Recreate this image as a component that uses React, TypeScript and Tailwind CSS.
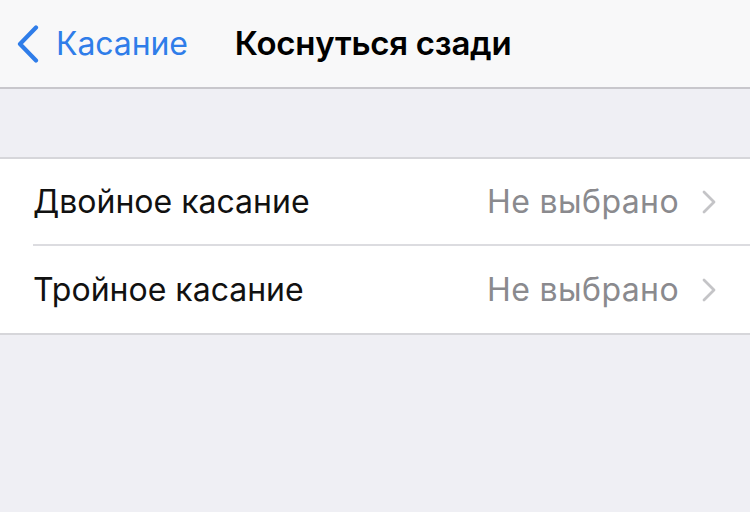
// 설정 행 데이터
const rows = [
  { label: "Двойное касание", value: "Не выбрано" },
  { label: "Тройное касание", value: "Не выбрано" },
];

export default function App() {
  return (
    <div
      className="flex h-[512px] w-[750px] flex-col overflow-hidden bg-[#efeff4]"
      style={{ fontFamily: "Inter, 'Noto Sans', sans-serif" }}
    >
      {/* 내비게이션 바 */}
      <header className="flex h-[89px] shrink-0 items-center border-b-2 border-[#c8c7cc] bg-[#f8f8f9]">
        <div className="flex items-center pl-[16px] text-[#2f7de9]">
          <svg width="24" height="38" viewBox="0 0 24 38" fill="none" className="mr-[16px]">
            <path d="M20 2.5 L4 19 L20 35.5" stroke="currentColor" strokeWidth="4.2" strokeLinecap="round" strokeLinejoin="round" />
          </svg>
          <span className="text-[32px] tracking-[-0.1px]">Касание</span>
        </div>
        <h1 className="ml-[47px] text-[33px] font-semibold tracking-[-0.25px] text-black">
          Коснуться сзади
        </h1>
      </header>

      {/* 목록 섹션 */}
      <div className="mt-[68px] border-y-2 border-[#d6d6da] bg-white">
        {rows.map((row, i) => (
          <div key={row.label} className="pl-[33px]">
            <div
              className={
                "flex h-[87px] items-center pr-[33px] " +
                (i < rows.length - 1 ? "border-b-2 border-[#dcdce0]" : "")
              }
            >
              <span className="flex-1 text-[32px] tracking-[0px] text-[#111]">{row.label}</span>
              <span className="text-[32px] tracking-[0.4px] text-[#8a8a8e]">{row.value}</span>
              <svg width="16" height="24" viewBox="0 0 16 24" fill="none" className="ml-[22px]">
                <path d="M3 2 L13 12 L3 22" stroke="#c4c4c7" strokeWidth="2.8" strokeLinecap="round" strokeLinejoin="round" />
              </svg>
            </div>
          </div>
        ))}
      </div>
    </div>
  );
}
